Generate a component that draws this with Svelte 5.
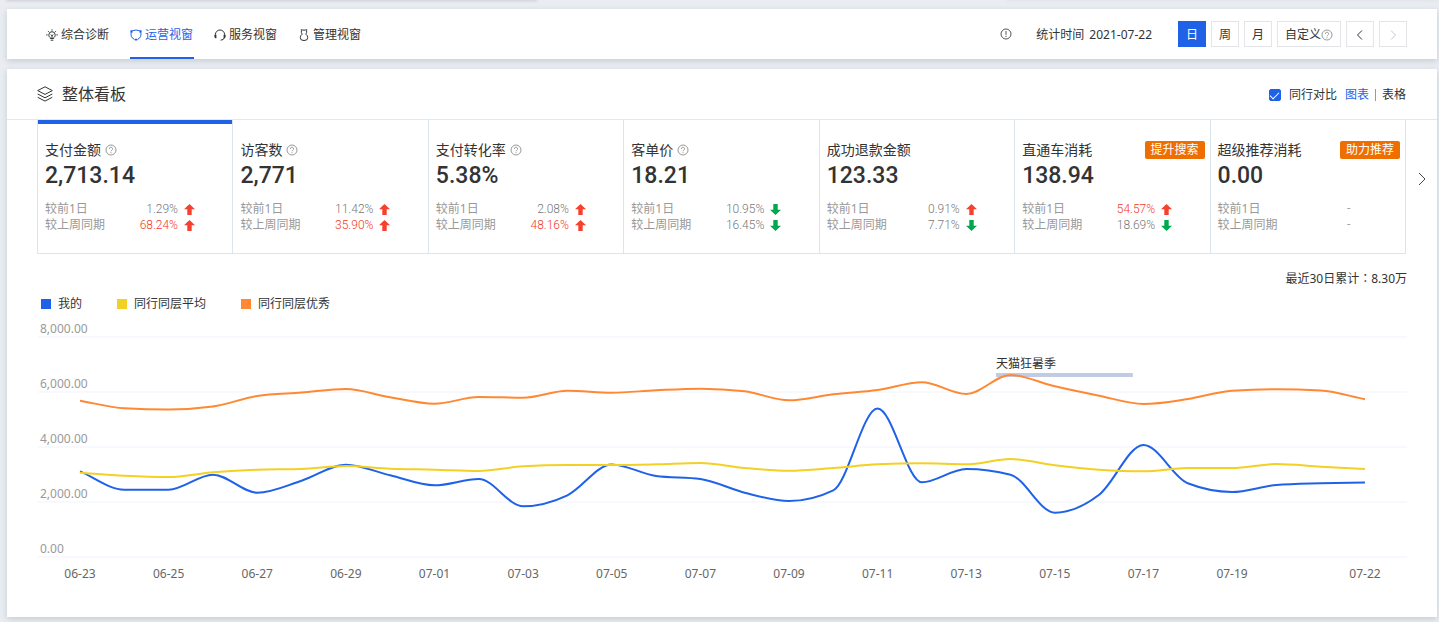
<script>
  const tabs = [
    { name: '综合诊断', icon: 'bulb' },
    { name: '运营视窗', icon: 'cycle' },
    { name: '服务视窗', icon: 'headset' },
    { name: '管理视窗', icon: 'person' }
  ];
  let activeTab = $state(1);

  const periods = ['日', '周', '月'];
  let period = $state('日');
  let compare = $state(true);

  const metrics = [
    { name: '支付金额', help: true, value: '2,713.14', day: ['1.29%', 'up', false], week: ['68.24%', 'up', true] },
    { name: '访客数', help: true, value: '2,771', day: ['11.42%', 'up', false], week: ['35.90%', 'up', true] },
    { name: '支付转化率', help: true, value: '5.38%', day: ['2.08%', 'up', false], week: ['48.16%', 'up', true] },
    { name: '客单价', help: true, value: '18.21', day: ['10.95%', 'down', false], week: ['16.45%', 'down', false] },
    { name: '成功退款金额', value: '123.33', day: ['0.91%', 'up', false], week: ['7.71%', 'down', false] },
    { name: '直通车消耗', badge: '提升搜索', value: '138.94', day: ['54.57%', 'up', true], week: ['18.69%', 'down', false] },
    { name: '超级推荐消耗', badge: '助力推荐', value: '0.00', day: ['-', '', false], week: ['-', '', false] }
  ];
  let selected = $state(0);

  const series = [
    {
      name: '我的',
      color: '#1f62e8',
      data: [3116, 2447, 2447, 2993, 2338, 2775, 3356, 2971, 2607, 2836, 1844, 2244, 3364, 2945, 2836, 2338, 2036, 2425, 5400, 2716, 3200, 2993, 1611, 2265, 4073, 2680, 2364, 2618, 2680, 2713]
    },
    {
      name: '同行同层平均',
      color: '#f3d024',
      data: [3065, 2956, 2909, 3080, 3175, 3200, 3309, 3211, 3175, 3127, 3298, 3345, 3345, 3371, 3418, 3236, 3138, 3236, 3371, 3407, 3371, 3564, 3335, 3175, 3116, 3236, 3236, 3382, 3284, 3200]
    },
    {
      name: '同行同层优秀',
      color: '#ff8833',
      data: [5683, 5407, 5364, 5473, 5855, 5978, 6109, 5807, 5574, 5818, 5793, 6047, 5974, 6062, 6120, 6025, 5698, 5916, 6073, 6353, 5927, 6618, 6207, 5865, 5564, 5745, 6047, 6098, 6055, 5735]
    }
  ];

  const yTicks = [
    [8000, '8,000.00'],
    [6000, '6,000.00'],
    [4000, '4,000.00'],
    [2000, '2,000.00'],
    [0, '0.00']
  ];
  const xTicks = [
    [0, '06-23'], [2, '06-25'], [4, '06-27'], [6, '06-29'], [8, '07-01'], [10, '07-03'],
    [12, '07-05'], [14, '07-07'], [16, '07-09'], [18, '07-11'], [20, '07-13'], [22, '07-15'],
    [24, '07-17'], [26, '07-19'], [29, '07-22']
  ];
  const festival = { name: '天猫狂暑季', from: 20.67, to: 23.76 };

  let width = $state(1370);
  const edge = 42;
  const px = (i) => edge + (i * (width - edge * 2)) / 29;
  const py = (v) => 240 - (v / 8000) * 220;

  // Cubic path that never overshoots its data points.
  function smooth(values) {
    const pts = values.map((v, i) => [px(i), py(v)]);
    const n = pts.length;
    const step = pts[1][0] - pts[0][0];
    const slope = pts.slice(1).map((p, i) => (p[1] - pts[i][1]) / step);
    const tangent = pts.map((_, i) => {
      if (i === 0) return slope[0];
      if (i === n - 1) return slope[n - 2];
      const a = slope[i - 1];
      const b = slope[i];
      if (a * b <= 0) return 0;
      return Math.sign(a) * Math.min(Math.abs(a) * 2, Math.abs(b) * 2, Math.abs(a + b) / 2);
    });
    let d = `M${pts[0][0]},${pts[0][1]}`;
    for (let i = 1; i < n; i++) {
      const k = step / 3;
      d += `C${pts[i - 1][0] + k},${pts[i - 1][1] + tangent[i - 1] * k} ${pts[i][0] - k},${pts[i][1] - tangent[i] * k} ${pts[i][0]},${pts[i][1]}`;
    }
    return d;
  }
</script>

{#snippet help()}
  <svg class="help" viewBox="0 0 12 12" aria-hidden="true">
    <circle cx="6" cy="6" r="5" />
    <path d="M4.4 4.9a1.6 1.6 0 1 1 2.4 1.3c-.6.4-.8.6-.8 1.1M6 8.2v1" />
  </svg>
{/snippet}

{#snippet row(label, [value, trend, strong])}
  <div class="row">
    <dt>{label}</dt>
    <dd class:strong>{value}</dd>
    <svg class="trend {trend}" viewBox="0 0 11 11" aria-hidden="true">
      {#if trend === 'up'}
        <path d="M5.5 0 11 5.2H7.7V11H3.3V5.2H0z" />
      {:else if trend === 'down'}
        <path d="M5.5 11 11 5.8H7.7V0H3.3v5.8H0z" />
      {/if}
    </svg>
  </div>
{/snippet}

<div class="page">
  <div class="above"><div class="wide"></div><div class="narrow"></div></div>

  <header class="panel bar">
    <nav>
      {#each tabs as tab, i}
        <a href="#tab-{i}" class:active={activeTab === i} onclick={() => (activeTab = i)}>
          <svg viewBox="0 0 12 12" aria-hidden="true">
            {#if tab.icon === 'bulb'}
              <path d="M4.3 8.6C3 8 2.8 6.9 2.8 5.9a3.2 3.2 0 0 1 6.4 0C9.2 6.9 9 8 7.7 8.6V9.5H4.3zM4.7 11.2h2.600M6 9V6.500M4.700 5.700 6 6.700l1.300-1M6 .4v1.200M.2 5.900h1.400M10.400 5.900h1.400M1.900 2l.9.8M10.100 2l-.9.8" />
            {:else if tab.icon === 'cycle'}
              <path d="M2.500 1.800Q6 .2 9.500 1.800M10.700 3Q12 8.300 7.500 10.500M4.500 10.500Q0 8.300 1.300 3" />
              <path class="solid" d="M.4 1.200h2.200v2.200H.4zM9.400 1.200h2.200v2.200H9.400zM4.900 9.700h2.200v1.900H4.900z" />
            {:else if tab.icon === 'headset'}
              <path d="M1.400 6.500V5.600a4.600 4.600 0 0 1 9.200 0v.9M10.400 8.600Q10 11 6.600 11.200" />
              <path class="solid" d="M.4 5.800h2v3.400h-1Q.4 8.800.4 7.800zM11.600 5.800h-2v3.400h1Q11.600 8.800 11.600 7.800z" />
            {:else}
              <path d="M4.200 5.200Q2.300 6.500 2.300 8.500A2.800 2.800 0 0 0 5 11.400h2a2.800 2.800 0 0 0 2.700-2.900Q9.700 6.500 7.800 5.200M4.200 5.200Q3 3.600 3.400 1.600L3.300.6 4.800 1.100H7.200L8.700.6 8.600 1.600Q9 3.600 7.800 5.200" />
            {/if}
          </svg>
          <span>{tab.name}</span>
        </a>
      {/each}
    </nav>

    <div class="filters">
      <svg class="info" viewBox="0 0 12 12" aria-hidden="true">
        <circle cx="6" cy="6" r="5" />
        <path d="M6 3v3.800M6 7.800v1.200" />
      </svg>
      <span class="time"><span>统计时间</span><time>2021-07-22</time></span>
      <div class="buttons">
        {#each periods as p}
          <button class:active={period === p} onclick={() => (period = p)}>{p}</button>
        {/each}
        <button class="custom">自定义{@render help()}</button>
        <button aria-label="前一天">
          <svg class="chev" viewBox="0 0 12 12"><path d="M8 1.500 3.500 6 8 10.500" /></svg>
        </button>
        <button aria-label="后一天" disabled>
          <svg class="chev" viewBox="0 0 12 12"><path d="M4 1.500 8.500 6 4 10.500" /></svg>
        </button>
      </div>
    </div>
  </header>

  <main class="panel">
    <div class="heading">
      <svg viewBox="0 0 16 16" aria-hidden="true">
        <path d="M8 .8 15.300 4.600 8 8.400.7 4.600zM.7 8 8 11.800 15.300 8M.7 11.300 8 15.100 15.300 11.300" />
      </svg>
      <h1>整体看板</h1>
      <label class="compare">
        <input type="checkbox" bind:checked={compare} />
        <span>同行对比</span>
      </label>
      <div class="views">
        <a class="active" href="#chart">图表</a>
        <i></i>
        <a href="#table">表格</a>
      </div>
    </div>

    <div class="strip">
      <div class="cards">
        {#each metrics as m, i}
          <section class="card" class:selected={selected === i}>
            <div class="name">
              <h2>{m.name}</h2>
              {#if m.help}{@render help()}{/if}
              {#if m.badge}<a class="badge" href="#promo-{i}">{m.badge}</a>{/if}
            </div>
            <p class="value">{m.value}</p>
            <dl>
              {@render row('较前1日', m.day)}
              {@render row('较上周同期', m.week)}
            </dl>
          </section>
        {/each}
      </div>
      <button class="next" aria-label="更多指标">
        <svg viewBox="0 0 8 14"><path d="M1 1l6 6-6 6" /></svg>
      </button>
    </div>

    <div class="trendbox">
      <p class="total">最近30日累计<span class="colon">：</span>8.30万</p>
      <ul class="legend">
        {#each series as s}
          <li><i style:background={s.color}></i>{s.name}</li>
        {/each}
      </ul>
      <div class="plot" bind:clientWidth={width}>
        <svg {width} height="270" role="img" aria-label="整体看板">
          {#each yTicks as [v, text]}
            <line x1="0" x2={width} y1={py(v)} y2={py(v)} />
            <text class="y" x="2" y={py(v) - 4}>{text}</text>
          {/each}
          {#each xTicks as [i, text]}
            <text class="x" x={px(i)} y="261">{text}</text>
          {/each}
          <rect x={px(festival.from)} y="56" width={px(festival.to) - px(festival.from)} height="4" />
          {#each series as s}
            <path d={smooth(s.data)} stroke={s.color} />
          {/each}
          <text class="event" x={px(festival.from)} y="51">{festival.name}</text>
        </svg>
      </div>
    </div>
  </main>
</div>

<style>
  :global(body) {
    margin: 0;
    background: #e9edf2;
  }
  .page {
    font: 300 12px/20px 'Noto Sans', 'Noto Sans CJK SC', sans-serif;
    font-weight: 400;
    color: #333;
    padding: 0 2px 5px 7px;
    display: flex;
    flex-direction: column;
    overflow: hidden;
  }
  .page * {
    box-sizing: border-box;
  }
  .above {
    height: 9px;
    display: flex;
    justify-content: space-between;
  }
  .above div {
    height: 0;
    box-shadow: 0 0 3px 1px rgba(0, 0, 0, 0.16);
  }
  .wide {
    width: 37%;
  }
  .narrow {
    width: 30%;
    opacity: 0.3;
  }
  .panel {
    background: #fff;
    box-shadow: 0 2px 6px rgba(60, 70, 90, 0.2);
  }
  svg {
    fill: none;
    stroke: currentColor;
    display: block;
    flex: none;
  }
  a {
    color: inherit;
    text-decoration: none;
  }
  h1,
  h2,
  p,
  dl,
  dd,
  ul {
    margin: 0;
    padding: 0;
    font-weight: inherit;
  }
  .bar {
    height: 50px;
    display: flex;
    justify-content: space-between;
    padding: 0 30px 0 39px;
    margin-bottom: 10px;
  }
  nav {
    display: flex;
    gap: 20px;
  }
  nav a {
    display: flex;
    align-items: center;
    gap: 3px;
    padding: 2px 1px 0 0;
    border-bottom: 2px solid transparent;
    border-top: 2px solid transparent;
  }
  nav a.active {
    color: #1f62e8;
    border-bottom-color: #1f62e8;
  }
  nav svg,
  .info {
    width: 12px;
    height: 12px;
  }
  .solid {
    fill: currentColor;
    stroke: none;
  }
  .filters {
    display: flex;
    align-items: center;
  }
  .info {
    color: #555;
  }
  .time {
    display: flex;
    gap: 5px;
    padding-top: 2px;
    margin: 0 26px 0 24px;
  }
  .buttons {
    display: flex;
    gap: 5px;
  }
  button {
    font: inherit;
    color: inherit;
    background: #fff;
    padding: 0;
    cursor: pointer;
    display: flex;
    align-items: center;
    justify-content: center;
  }
  .buttons button {
    width: 28px;
    height: 26px;
    padding-top: 1px;
    border: 1px solid #e3e5e8;
  }
  .buttons .custom {
    width: 64px;
  }
  .buttons .active {
    background: #1f62e8;
    border-color: #1f62e8;
    color: #fff;
  }
  .buttons button:disabled {
    color: #c8c8c8;
  }
  .chev {
    width: 12px;
    height: 12px;
  }
  .help {
    width: 12px;
    height: 12px;
    color: #999;
  }
  .heading {
    height: 51px;
    border-bottom: 1px solid #e5e7ea;
    padding: 0 31px 0 30px;
    display: flex;
    align-items: center;
  }
  .heading svg {
    width: 16px;
    height: 16px;
  }
  h1 {
    font-size: 16px;
    margin-left: 9px;
    flex: 1;
  }
  .compare,
  .views {
    display: flex;
    align-items: center;
    padding-top: 2px;
  }
  .compare {
    gap: 8px;
  }
  .compare input {
    appearance: none;
    width: 12px;
    height: 12px;
    margin: 0;
    border: 1px solid #1f62e8;
    border-radius: 2px;
    display: grid;
    place-items: center;
  }
  .compare input:checked {
    background: #1f62e8;
  }
  .compare input:checked::before {
    content: '';
    width: 8px;
    height: 4px;
    border: solid #fff;
    border-width: 0 0 1px 1px;
    transform: translateY(-1px) rotate(-45deg);
  }
  .views {
    margin-left: 8px;
    gap: 6px;
  }
  .views .active {
    color: #1f62e8;
  }
  .views i {
    width: 1px;
    height: 12px;
    background: #999;
  }
  .strip {
    display: flex;
    padding-left: 30px;
  }
  .cards {
    flex: 1;
    display: grid;
    grid-template-columns: repeat(7, 1fr);
    border: solid #dbe5ee;
    border-width: 0 1px 1px 0;
  }
  .card {
    border-left: 1px solid #dbe5ee;
    padding: 20px 5px 22px 7px;
  }
  .card.selected {
    position: relative;
  }
  .card.selected::before {
    content: '';
    position: absolute;
    inset: 0 0 auto 0;
    height: 4px;
    background: #1f62e8;
  }
  .name {
    display: flex;
    align-items: center;
    gap: 4px;
  }
  h2 {
    font-size: 14px;
    line-height: 20px;
  }
  .badge {
    margin-left: auto;
    width: 60px;
    height: 18px;
    line-height: 18px;
    border-radius: 2px;
    background: #ee6f00;
    color: #fff;
    text-align: center;
  }
  .value {
    font: 500 23px/32px Roboto, sans-serif;
    margin-bottom: 7px;
  }
  .row {
    display: grid;
    grid-template-columns: 1fr auto 11px;
    column-gap: 6px;
    align-items: center;
    width: 150px;
    height: 16px;
    color: #999;
  }
  dd {
    font: 300 12px/16px Roboto, sans-serif;
    color: #777;
  }
  dd.strong {
    color: #f5372a;
  }
  .trend {
    width: 11px;
    height: 11px;
    stroke: none;
  }
  .up {
    fill: #f5412f;
  }
  .down {
    fill: #00a94f;
  }
  .next {
    width: 31px;
    border: 0;
    padding-bottom: 16px;
    color: #444;
  }
  .next svg {
    width: 8px;
    height: 14px;
  }
  .trendbox {
    padding: 15px 30px 30px 31px;
  }
  .total {
    text-align: right;
  }
  .colon {
    font-family: 'Noto Sans CJK TC', sans-serif;
    line-height: 1;
  }
  .legend {
    list-style: none;
    display: flex;
    gap: 35px;
    padding: 5px 0 3px 3px;
  }
  .legend li {
    display: flex;
    align-items: center;
    gap: 7px;
  }
  .legend i {
    width: 10px;
    height: 10px;
  }
  .plot {
    height: 270px;
    overflow: hidden;
  }
  .plot line {
    stroke: #f8f9fe;
    stroke-width: 2;
  }
  .plot path {
    stroke-width: 2;
  }
  .plot rect {
    fill: #c0cbe5;
    stroke: none;
  }
  text {
    stroke: none;
    fill: #666;
  }
  .y {
    fill: #999;
  }
  .x {
    text-anchor: middle;
  }
  .event {
    fill: #333;
  }
</style>
